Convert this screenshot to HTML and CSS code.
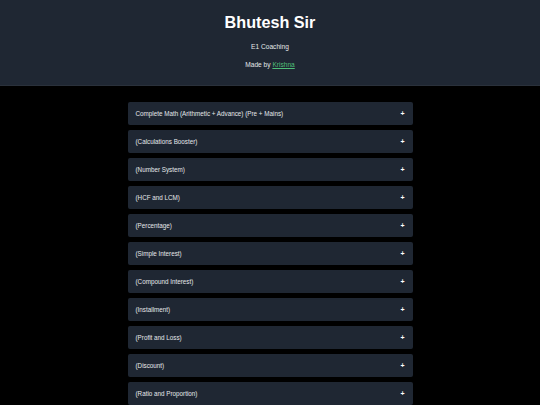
FILE: index.html
```html
<!DOCTYPE html>
<html>
<head>
<meta charset="utf-8">
<link rel="stylesheet" href="styles.css">
</head>
<body>
<header class="hero">
  <h1 class="title">Bhutesh Sir</h1>
  <p class="sub">E1 Coaching</p>
  <p class="credit">Made by <a href="#">Krishna</a></p>
</header>
<main class="list">
  <div class="item"><span>Complete Math (Arithmetic + Advance) (Pre + Mains)</span><span class="plus">+</span></div>
  <div class="item"><span>(Calculations Booster)</span><span class="plus">+</span></div>
  <div class="item"><span>(Number System)</span><span class="plus">+</span></div>
  <div class="item"><span>(HCF and LCM)</span><span class="plus">+</span></div>
  <div class="item"><span>(Percentage)</span><span class="plus">+</span></div>
  <div class="item"><span>(Simple Interest)</span><span class="plus">+</span></div>
  <div class="item"><span>(Compound Interest)</span><span class="plus">+</span></div>
  <div class="item"><span>(Installment)</span><span class="plus">+</span></div>
  <div class="item"><span>(Profit and Loss)</span><span class="plus">+</span></div>
  <div class="item"><span>(Discount)</span><span class="plus">+</span></div>
  <div class="item"><span>(Ratio and Proportion)</span><span class="plus">+</span></div>
</main>
</body>
</html>
```
FILE: styles.css
```css
html, body {
  margin: 0;
  padding: 0;
  background: #000;
  font-family: "Liberation Sans", Arial, sans-serif;
  color: #e5e7eb;
}
.hero {
  background: #1f2733;
  border-bottom: 1px solid #2a313b;
  text-align: center;
  padding: 13px 0 16px;
}
.title {
  margin: 0;
  font-size: 16.2px;
  line-height: 18px;
  font-weight: 700;
  color: #fff;
}
.sub, .credit {
  margin: 12px 0 0;
  font-size: 6.6px;
  line-height: 8px;
  color: #e5e7eb;
}
.credit {
  margin-top: 10px;
}
.credit a {
  color: #4fbf78;
  text-decoration: underline;
}
.list {
  width: 285px;
  margin: 16px auto 0;
  display: flex;
  flex-direction: column;
  gap: 5px;
}
.item {
  height: 23px;
  flex: none;
  background: #1f2733;
  border-radius: 2px;
  display: flex;
  align-items: center;
  justify-content: space-between;
  padding: 0 8px;
  font-size: 6.3px;
  color: #e5e7eb;
}
.plus {
  font-weight: 700;
  font-size: 7px;
  color: #fff;
}
```
